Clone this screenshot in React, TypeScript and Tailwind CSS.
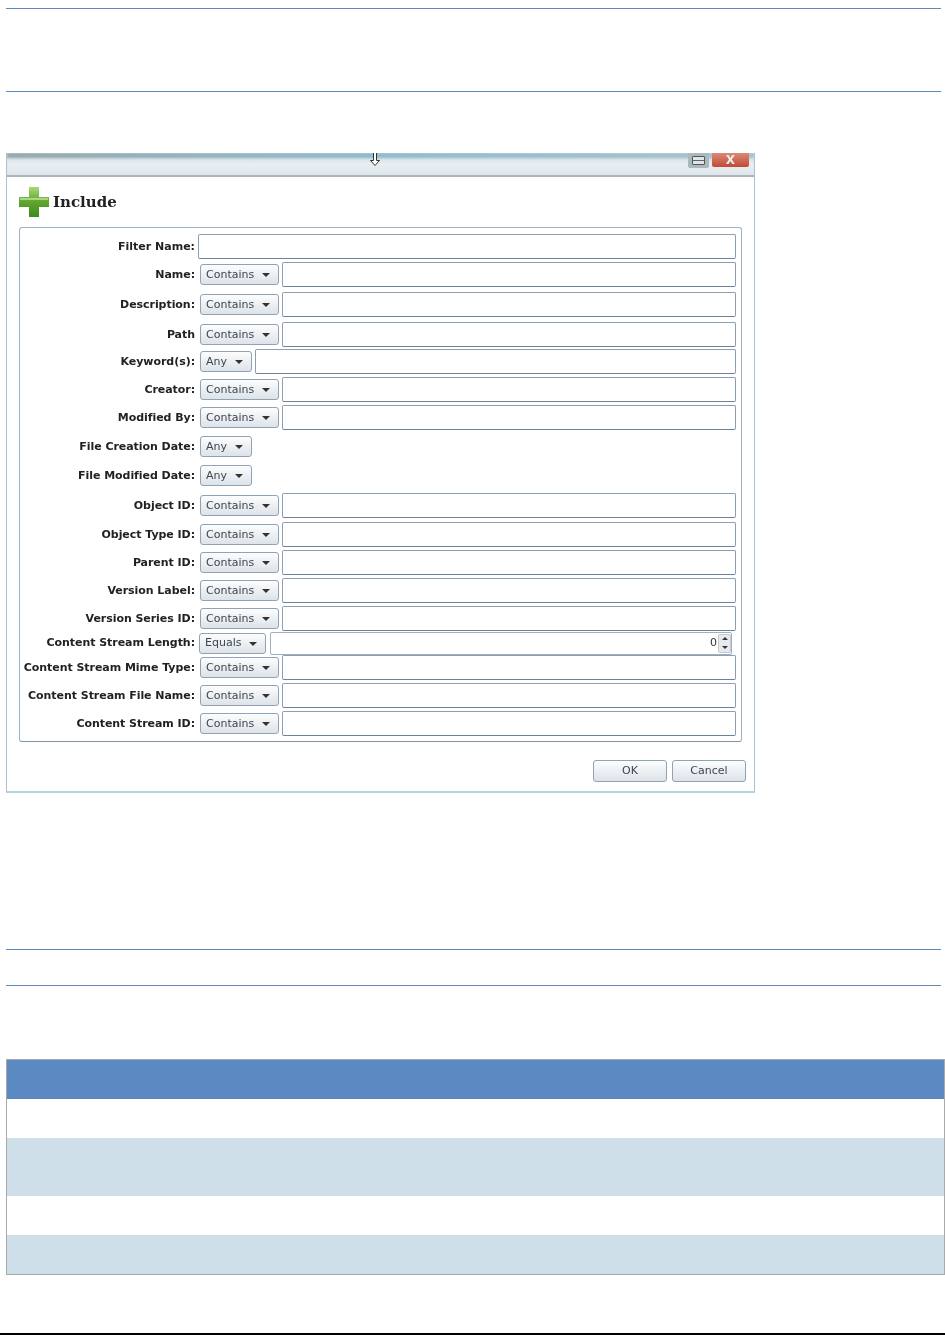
const rows = [
  { label: "Name:", op: "Contains", mt: "mt-[3px]", h: "h-[25px]" },
  { label: "Description:", op: "Contains", mt: "mt-[5px]", h: "h-[25px]" },
  { label: "Path", op: "Contains", mt: "mt-[5px]", h: "h-[25px]" },
  { label: "Keyword(s):", op: "Any", mt: "mt-[2px]", h: "h-[25px]" },
  { label: "Creator:", op: "Contains", mt: "mt-[3px]", h: "h-[25px]" },
  { label: "Modified By:", op: "Contains", mt: "mt-[3px]", h: "h-[25px]" },
  { label: "File Creation Date:", op: "Any", mt: "mt-[4px]", h: "h-[25px]", noInput: true },
  { label: "File Modified Date:", op: "Any", mt: "mt-[4px]", h: "h-[25px]", noInput: true },
  { label: "Object ID:", op: "Contains", mt: "mt-[5px]", h: "h-[25px]" },
  { label: "Object Type ID:", op: "Contains", mt: "mt-[4px]", h: "h-[25px]" },
  { label: "Parent ID:", op: "Contains", mt: "mt-[3px]", h: "h-[25px]" },
  { label: "Version Label:", op: "Contains", mt: "mt-[3px]", h: "h-[25px]" },
  { label: "Version Series ID:", op: "Contains", mt: "mt-[3px]", h: "h-[25px]" },
  { label: "Content Stream Length:", op: "Equals", mt: "mt-0", h: "h-[24px]", spinner: true },
  { label: "Content Stream Mime Type:", op: "Contains", mt: "mt-0", h: "h-[25px]" },
  { label: "Content Stream File Name:", op: "Contains", mt: "mt-[3px]", h: "h-[25px]" },
  { label: "Content Stream ID:", op: "Contains", mt: "mt-[3px]", h: "h-[25px]" },
];

function Dropdown({ op }: { op: string }) {
  const width = op === "Contains" ? "w-[79px] ml-[5px]" : op === "Any" ? "w-[52px] ml-[5px]" : "w-[67px] ml-[4px]";
  return (
    <div
      className={`${width} flex h-[21px] shrink-0 items-center justify-between rounded-[3px] border border-[#8fa3b5] bg-gradient-to-b from-[#fcfdfd] to-[#dde3e9] pl-[5px] pr-[8px] pt-[1px] text-[11px] text-[#3d4650]`}
    >
      <span>{op}</span>
      <span className="h-0 w-0 border-x-[4px] border-t-[4px] border-x-transparent border-t-[#333]" />
    </div>
  );
}

function Field({ spinner }: { spinner?: boolean }) {
  if (spinner) {
    return (
      <div className="ml-[4px] mr-[9px] flex h-[23px] flex-1 items-center justify-end rounded-[2px] border border-[#9fb0bf] bg-white text-[11px] text-[#333]">
        <span className="mr-[1px]">0</span>
        <div className="flex h-[19px] w-[13px] flex-col items-center justify-around rounded-[2px] border border-[#c3cbd2] bg-[#e6eaee]">
          <span className="h-0 w-0 border-x-[3px] border-b-[3px] border-x-transparent border-b-[#333]" />
          <span className="h-0 w-0 border-x-[3px] border-t-[3px] border-x-transparent border-t-[#333]" />
        </div>
      </div>
    );
  }
  return <div className="ml-[3px] mr-[5px] h-[25px] flex-1 rounded-[2px] border border-[#8c9fb0] border-b-[#6f8294] bg-white" />;
}

function TitleBar() {
  return (
    <div className="relative h-[24px] shrink-0 overflow-hidden border-b-[2px] border-[#a9b5bf] bg-gradient-to-b from-[#c4d4dc] via-[#e9eef1] to-[#dfe6ea]">
      <div className="h-[5px] bg-gradient-to-r from-[#97a9ae] via-[#8fbccf] to-[#a9c2ce] blur-[1px]" />
      <svg className="absolute left-[362px] top-0" width="12" height="14" viewBox="0 0 12 14" fill="#fff" stroke="#333" strokeWidth="1">
        <path d="M4.5 0V7.5H1.5L6 12.5L10.5 7.5H7.5V0" />
      </svg>
      <div className="absolute left-[681px] top-0 flex gap-[3px]">
        <div className="flex h-[15px] w-[21px] items-center justify-center rounded-b-[2px] bg-[#a9babf]">
          <span className="flex h-[9px] w-[13px] items-center rounded-[1px] border border-[#555] bg-[#dfe5e8]">
            <span className="h-px w-full bg-[#666]" />
          </span>
        </div>
        <div className="flex h-[14px] w-[37px] items-center justify-center rounded-b-[2px] bg-gradient-to-b from-[#d98a78] to-[#bf4a33] text-[12px] font-bold leading-none text-[#eee]">
          X
        </div>
      </div>
    </div>
  );
}

function Dialog() {
  return (
    <div className="ml-[6px] mt-[61px] flex h-[640px] w-[749px] flex-col border-x border-b-2 border-x-[#aebfcd] border-b-[#b5d3e3] bg-white font-['DejaVu_Sans',sans-serif] blur-[0.3px]">
      <TitleBar />
      <div className="flex h-[50px] shrink-0 items-center pl-[11px]">
        <svg width="32" height="32" viewBox="0 0 32 32">
          <defs>
            <linearGradient id="plus" x1="0" y1="0" x2="0" y2="1">
              <stop offset="0" stopColor="#a8d878" />
              <stop offset="0.5" stopColor="#5fa52f" />
              <stop offset="1" stopColor="#3d8a1e" />
            </linearGradient>
          </defs>
          <path d="M11 1H21V11H31V21H21V31H11V21H1V11H11Z" fill="url(#plus)" />
          <path d="M2 13H30" stroke="#c4e6a0" strokeWidth="2" opacity="0.7" />
        </svg>
        <span className="ml-[3px] font-['DejaVu_Serif',serif] text-[15px] font-bold text-[#222]">Include</span>
      </div>
      <div className="mx-[12px] box-border h-[515px] w-[723px] shrink-0 rounded-[3px] border border-[#9fb1c1] border-b-[#7f93a5] pt-[6px]">
        <div className="flex h-[25px] items-center">
          <div className="w-[175px] shrink-0 pt-[2px] text-right text-[11px] font-bold text-[#222]">Filter Name:</div>
          <div className="ml-[3px] mr-[5px] h-[25px] flex-1 rounded-[2px] border border-[#8c9fb0] border-b-[#6f8294] bg-white" />
        </div>
        {rows.map((row) => (
          <div key={row.label} className={`${row.mt} ${row.h} flex items-center`}>
            <div className="w-[175px] shrink-0 whitespace-nowrap pt-[1px] text-right text-[11px] font-bold tracking-[-0.05px] text-[#222]">
              {row.label}
            </div>
            <Dropdown op={row.op} />
            {!row.noInput && <Field spinner={row.spinner} />}
          </div>
        ))}
      </div>
      <div className="mr-[8px] mt-[18px] flex justify-end gap-[5px]">
        {["OK", "Cancel"].map((name) => (
          <div
            key={name}
            className="flex h-[22px] w-[74px] items-center justify-center rounded-[3px] border border-[#8fa3b5] bg-gradient-to-b from-[#fcfdfd] to-[#dde3e9] text-[11px] text-[#3d4650]"
          >
            {name}
          </div>
        ))}
      </div>
    </div>
  );
}

function Rule({ className }: { className: string }) {
  return <div className={`${className} ml-[6px] mr-[4px] h-px bg-[#5b8ac3]`} />;
}

export default function App() {
  return (
    <div className="relative h-[1335px] w-[945px] overflow-hidden bg-white">
      <Rule className="mt-[8px]" />
      <Rule className="mt-[82px]" />
      <Dialog />
      <Rule className="mt-[156px]" />
      <Rule className="mt-[35px]" />
      <div className="ml-[6px] mt-[73px] w-[939px] border border-[#aaaaaa]">
        <div className="h-[39px] bg-[#5b8ac3]" />
        <div className="h-[39px] bg-white" />
        <div className="h-[58px] bg-[#cfdfe9]" />
        <div className="h-[39px] bg-white" />
        <div className="h-[39px] bg-[#cfdfe9]" />
      </div>
      <div className="absolute bottom-0 left-0 h-[2px] w-full bg-black" />
    </div>
  );
}
